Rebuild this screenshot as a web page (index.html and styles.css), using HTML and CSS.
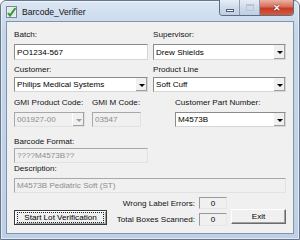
FILE: index.html
```html
<!DOCTYPE html>
<html lang="en">
<head>
    <meta charset="UTF-8">
    <title>Barcode_Verifier</title>
    <link rel="stylesheet" href="styles.css">
</head>
<body>
    <div class="window">
        <div class="titlebar">
            <svg class="app-icon" width="11" height="12" viewBox="0 0 11 12">
                <rect x="0.5" y="0.5" width="10" height="11" fill="#f4f6f8" stroke="#7d8791"/>
                <rect x="1.5" y="1.5" width="8" height="9" fill="#dfe6ec"/>
                <path d="M2 7 L4 9.5 L9.5 2" fill="none" stroke="#2f9a2f" stroke-width="2"/>
            </svg>
            <span class="title">Barcode_Verifier</span>
            <div class="caption">
                <span class="cap-btn min"><i></i></span>
                <span class="cap-btn max"><i></i></span>
                <span class="cap-btn close">&#x2715;</span>
            </div>
        </div>

        <div class="client">
            <div class="row pair r1">
                <div class="field">
                    <label>Batch:</label>
                    <div class="box tall">PO1234-567</div>
                </div>
                <div class="field">
                    <label>Supervisor:</label>
                    <div class="box combo tall"><span>Drew Shields</span><i class="drop"></i></div>
                </div>
            </div>

            <div class="row pair r2">
                <div class="field">
                    <label>Customer:</label>
                    <div class="box combo"><span>Philips Medical Systems</span><i class="drop"></i></div>
                </div>
                <div class="field">
                    <label>Product Line</label>
                    <div class="box combo"><span>Soft Cuff</span><i class="drop"></i></div>
                </div>
            </div>

            <div class="row codes r3">
                <div class="field gmi">
                    <label>GMI Product Code:</label>
                    <div class="box combo off"><span>001927-00</span><i class="drop"></i></div>
                </div>
                <div class="field mcode">
                    <label>GMI M Code:</label>
                    <div class="box off">03547</div>
                </div>
                <div class="field part">
                    <label>Customer Part Number:</label>
                    <div class="box combo"><span>M4573B</span><i class="drop"></i></div>
                </div>
            </div>

            <div class="row r4">
                <div class="field format">
                    <label>Barcode Format:</label>
                    <div class="box off">????M4573B??</div>
                </div>
            </div>

            <div class="row r5">
                <div class="field">
                    <label>Description:</label>
                    <div class="box off">M4573B Pediatric Soft (ST)</div>
                </div>
            </div>

            <div class="bottom">
                <span class="count-label errors-label">Wrong Label Errors:</span>
                <div class="counter errors">0</div>
                <button class="btn start"><span>Start Lot Verification</span></button>
                <span class="count-label total-label">Total Boxes Scanned:</span>
                <div class="counter total">0</div>
                <button class="btn exit">Exit</button>
            </div>
        </div>
    </div>
</body>
</html>
```

FILE: styles.css
```css
* { box-sizing: border-box; }
body { margin: 0; width: 300px; height: 240px; overflow: hidden; background: #fff;
       font-family: "Liberation Sans", Arial, sans-serif; font-size: 8.1px; color: #000; }

/* window frame */
.window { width: 300px; height: 240px; display: flex; flex-direction: column;
          padding: 0 5px 5px; border: 1px solid #66778c; border-radius: 6px 6px 0 0;
          background: linear-gradient(#dbe6f3, #c4d6ea 30px, #bdd0e6);
          box-shadow: inset 0 0 0 1px rgba(255,255,255,0.55); }
.titlebar { height: 20px; display: flex; align-items: center; position: relative; }
.app-icon { display: block; margin-top: 1px; }
.title { margin-left: 5px; font-size: 8.6px; color: #111; margin-top: 1px; }
.caption { position: absolute; top: -1px; right: 0; height: 16px; display: flex;
           border: 1px solid #5d6d82; border-top: none; border-radius: 0 0 4px 4px; overflow: hidden; }
.cap-btn { width: 20px; height: 100%; display: flex; align-items: center; justify-content: center;
           background: linear-gradient(#e6edf6, #cfdbea 50%, #bfcfe3); border-right: 1px solid #8d9db1; }
.cap-btn.min i { width: 8px; height: 3px; margin-top: 5px; background: #fff; border: 1px solid #4f5d6e; }
.cap-btn.max i { width: 8px; height: 7px; border: 1px solid #b9c5d3; border-top-width: 2px; background: transparent; }
.cap-btn.close { width: 33px; border-right: none; color: #fff; font-size: 9px; font-weight: bold;
                 background: linear-gradient(#eab1a3, #d86d58 45%, #c53c24 55%, #d45a40);
                 text-shadow: 0 0 1px #5a1a10, 0 0 1px #5a1a10; }

/* client area */
.client { flex: 1; background: #f0f0f0; border: 1px solid #8494a8; padding: 0 7px; }
.row { display: flex; }
.pair { gap: 5px; }
.pair .field:first-child { width: 134px; }
.pair .field:last-child { width: 133px; }
.codes { gap: 7px; }
.gmi { width: 71px; }
.mcode { width: 49px; }
.part { width: 111px; margin-left: 27px; }
.format { width: 134px; }
.r5 .field { width: 272px; }

.field label { display: block; height: 10px; line-height: 10px; color: #111; }
.r1 { margin-top: 8px; }
.r1 label { margin-bottom: 4px; }
.r2 { margin-top: 5px; }
.r2 label { margin-bottom: 2px; }
.r3 { margin-top: 6px; }
.r3 label { margin-bottom: 4px; }
.r4 { margin-top: 10px; }
.r4 label { margin-bottom: 1px; }
.r5 { margin-top: 1px; }
.r5 label { margin-bottom: 4px; }

.box { height: 15px; display: flex; align-items: center; padding-left: 2px; background: #fff;
       border: 1px solid; border-color: #8b8b8b #d6d6d6 #d6d6d6 #8b8b8b; white-space: nowrap; }
.box.tall { height: 16px; }
.box.off { background: #f0f0f0; color: #8d8d8d; border-color: #a8a8a8 #e2e2e2 #e2e2e2 #a8a8a8; }
.combo { padding-right: 0; }
.combo span { flex: 1; }
.drop { width: 12px; height: 100%; display: flex; align-items: center; justify-content: center;
        background: #f0f0f0; border-left: 1px solid #fff; box-shadow: inset -1px -1px 0 #a0a0a0; }
.drop::after { content: ""; border: 3px solid transparent; border-top: 3px solid #000; border-bottom: none;
               margin-top: 1px; }
.combo.off .drop::after { border-top-color: #a0a0a0; }

/* counters and buttons */
.bottom { margin-top: 4px; display: grid; grid-template-columns: 93px 84px 28px 55px;
          grid-template-rows: 12px 17px; column-gap: 4px; }
.count-label { grid-column: 2; justify-self: end; align-self: center; color: #111; white-space: nowrap; }
.errors-label { grid-row: 1; }
.total-label { grid-row: 2; margin-top: 3px; }
.counter { grid-column: 3; display: flex; align-items: center; justify-content: center; background: #f0f0f0;
           border: 1px solid; border-color: #9a9a9a #e6e6e6 #e6e6e6 #9a9a9a; }
.errors { grid-row: 1; }
.total { grid-row: 2; align-self: end; height: 13px; }
.btn { font: inherit; color: #000; padding: 0; background: #f0f0f0; height: 15px;
       border: 1px solid; border-color: #fff #6b6b6b #6b6b6b #fff; box-shadow: inset -1px -1px 0 #a0a0a0; }
.start { grid-column: 1; grid-row: 2; margin-top: 1px; border-color: #3a3a3a; box-shadow: inset 1px 1px 0 #fff, inset -1px -1px 0 #a0a0a0;
         display: flex; align-items: center; justify-content: center; }
.start span { display: block; width: 87px; height: 11px; line-height: 9px; border: 1px dotted #222; }
.exit { grid-column: 4; grid-row: 2; }
```
